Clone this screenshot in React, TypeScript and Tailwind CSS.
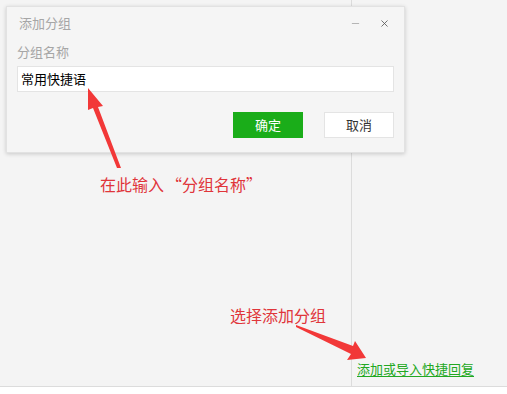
import { X, Minus } from "lucide-react";

const font = { fontFamily: '"Noto Sans CJK SC", "Microsoft YaHei", sans-serif' };

const App = () => {
  return (
    <div
      className="relative w-[507px] h-[394px] flex flex-col bg-[#f4f4f4] overflow-hidden"
      style={font}
    >
      {/* background panes */}
      <div className="flex flex-1">
        <div className="w-[352px] border-r border-[#dcdcdc]" />
        <div className="flex-1 flex flex-col justify-end pl-[5px] pb-[9px]">
          <a className="text-[13px] leading-[16px] text-[#22a822] underline underline-offset-2 cursor-pointer">
            添加或导入快捷回复
          </a>
        </div>
      </div>
      <div className="h-[8px] bg-white border-t border-[#dcdcdc]" />

      {/* dialog */}
      <div className="absolute left-[6px] top-[6px] w-[399px] h-[147px] bg-[#f5f5f5] border border-[#e2e2e2] shadow-[0_1px_4px_rgba(0,0,0,0.18)] px-[10px] pt-[8px]">
        <div className="flex items-center h-[16px]">
          <span className="text-[13px] text-[#a6a6a6] ml-[2px]">添加分组</span>
          <div className="ml-auto flex items-center gap-[18px] text-[#555]">
            <Minus size={11} strokeWidth={1.3} className="text-[#888]" />
            <X size={11} strokeWidth={1.8} className="mr-[4px]" />
          </div>
        </div>
        <div className="mt-[13px] text-[13px] leading-[16px] text-[#a6a6a6]">分组名称</div>
        <div className="mt-[6px] h-[26px] bg-white border border-[#e4e4e4] flex items-center px-[3px] text-[13px] text-black">
          常用快捷语
        </div>
        <div className="mt-[20px] flex justify-end gap-[21px]">
          <button className="w-[70px] h-[26px] bg-[#1aad19] text-white text-[13px]">确定</button>
          <button className="w-[70px] h-[26px] bg-white border border-[#e4e4e4] text-[#333] text-[13px]">
            取消
          </button>
        </div>
      </div>

      {/* annotations */}
      <svg className="absolute left-0 top-0 pointer-events-none" width="507" height="394">
        <polygon points="88,88 103,106 98,107 121,168 117,168 93,108 88,110" fill="#f23838" />
        <polygon points="296,325 353,346 355,341 366,358 347,360 351,354 296,327" fill="#f23838" />
      </svg>
      <div className="absolute left-[100px] top-[174px] text-[16px] leading-[20px] text-[#e0353a] flex">
        <span>在此输入</span>
        <span className="inline-block w-[18px] text-right">“</span>
        <span>分组名称</span>
        <span className="inline-block w-[18px] text-left">”</span>
      </div>
      <div className="absolute left-[230px] top-[305px] text-[16px] leading-[20px] text-[#e0353a]">
        选择添加分组
      </div>
    </div>
  );
};

export default App;
